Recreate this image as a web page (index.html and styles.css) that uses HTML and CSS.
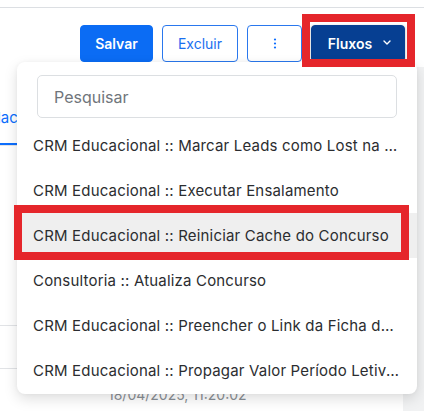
FILE: index.html
```html
<!DOCTYPE html>
<html lang="pt-BR">
<head>
<meta charset="utf-8">
<title>Fluxos</title>
<link rel="stylesheet" href="styles.css">
</head>
<body>
<div class="page">
  <div class="topbar"></div>
  <div class="toolbar">
    <button class="btn btn-primary btn-salvar">Salvar</button>
    <button class="btn btn-outline btn-excluir">Excluir</button>
    <button class="btn btn-outline btn-more" aria-label="Mais">
      <svg width="4" height="12" viewBox="0 0 4 12"><circle cx="2" cy="1.5" r="1.1" fill="#0d6efd"/><circle cx="2" cy="5.5" r="1.1" fill="#0d6efd"/><circle cx="2" cy="9.5" r="1.1" fill="#0d6efd"/></svg>
    </button>
    <button class="btn btn-dark btn-fluxos">Fluxos
      <svg class="chev" width="8" height="5" viewBox="0 0 8 5"><path d="M1 1 L4 4 L7 1" fill="none" stroke="#fff" stroke-width="1.4" stroke-linecap="round" stroke-linejoin="round"/></svg>
    </button>
  </div>
  <div class="content">
    <div class="main">
      <div class="tabs">
        <span class="tab active">Relacionamento</span>
      </div>
      <div class="table">
        <div class="row"><span class="cell">Registro anterior</span></div>
        <div class="row"><span class="cell">Registro anterior</span></div>
        <div class="row last"><span class="cell date">18/04/2025, 11:20:02</span></div>
      </div>
    </div>
    <div class="aside"></div>
  </div>

  <div class="dropdown">
    <div class="search"><input class="search-input" type="text" placeholder="Pesquisar"></div>
    <ul class="menu">
      <li class="item">CRM Educacional :: Marcar Leads como Lost na fase de Inscrição</li>
      <li class="item">CRM Educacional :: Executar Ensalamento</li>
      <li class="item hover">CRM Educacional :: Reiniciar Cache do Concurso</li>
      <li class="item">Consultoria :: Atualiza Concurso</li>
      <li class="item">CRM Educacional :: Preencher o Link da Ficha de Inscrição</li>
      <li class="item">CRM Educacional :: Propagar Valor Período Letivo Atual</li>
    </ul>
  </div>

  <div class="mark mark-fluxos"></div>
  <div class="mark mark-item"></div>
</div>
</body>
</html>
```
FILE: styles.css
```css
* { box-sizing: border-box; }
html, body { margin: 0; padding: 0; }
body {
  font-family: Inter, "Noto Sans", Arial, sans-serif;
  background: #ffffff;
  color: #212529;
  width: 424px;
  height: 411px;
  overflow: hidden;
}
.page { position: relative; width: 424px; height: 411px; overflow: hidden; }

.topbar { height: 8px; border-bottom: 1px solid #dcdfe3; }

.toolbar {
  display: flex;
  justify-content: flex-end;
  gap: 9px;
  padding: 17px 19px 0 0;
  height: 54px;
}
.btn {
  height: 37px;
  border-radius: 4px;
  font-family: Inter, Arial, sans-serif;
  font-size: 14px;
  display: flex;
  align-items: center;
  justify-content: center;
  padding: 0;
  cursor: pointer;
}
.btn-primary { background: #0b6cf4; border: 1px solid #0b6cf4; color: #fff; font-weight: 600; }
.btn-outline { background: #fff; border: 1px solid #2a78ee; color: #1a6ff0; }
.btn-dark { background: #063f92; border: 1px solid #063f92; color: #fff; font-weight: 600; box-shadow: 0 1px 3px rgba(0,0,0,.3); }
.btn-salvar { width: 73px; }
.btn-excluir { width: 76px; }
.btn-more { width: 55px; }
.btn-fluxos { width: 94px; gap: 11px; padding-left: 3px; }
.chev { margin-top: -3px; }

.content { display: flex; height: 349px; }
.main { flex: 1; }
.aside { width: 21px; background: #f1f2f3; margin-top: 5px; }

.tabs {
  margin-top: 36px;
  border-bottom: 1px solid #e3e5e8;
  overflow: hidden;
  white-space: nowrap;
}
.tab {
  display: inline-block;
  margin-left: -21px;
  padding: 10px 0 15px;
  line-height: 20px;
  font-size: 15px;
  color: #0d6efd;
  border-bottom: 2px solid #0d6efd;
}

.table { margin-top: 137px; }
.row {
  height: 43px;
  border-bottom: 1px solid #e1e3e6;
  display: flex;
  align-items: center;
  padding-left: 108px;
}
.row.last { border-bottom: none; align-items: flex-start; padding-top: 17px; }
.cell { font-size: 14px; color: #8a8f95; }

.dropdown {
  position: absolute;
  left: 17px;
  top: 62px;
  width: 400px;
  height: 332px;
  background: #fff;
  border-radius: 8px;
  box-shadow: 0 5px 14px rgba(0,0,0,.13), 0 0 4px rgba(0,0,0,.04);
  padding: 13px 0 0;
}
.search { padding: 0 20px; }
.search-input {
  width: 360px;
  height: 43px;
  border: 1px solid #dcdfe2;
  border-radius: 5px;
  padding: 0 16px;
  font-family: Inter, Arial, sans-serif;
  font-size: 16px;
  color: #333;
  outline: none;
}
.search-input::placeholder { color: #70757b; }

.menu { list-style: none; margin: 5px 0 0; padding: 0; }
.item {
  height: 45px;
  line-height: 45px;
  padding: 0 16px 0 16px;
  font-size: 15px;
  letter-spacing: 0.18px;
  color: #2b2d30;
  white-space: nowrap;
  overflow: hidden;
  text-overflow: ellipsis;
}
.item.hover { background: #efefef; }

.mark {
  position: absolute;
  border: 8px solid #e5262b;
}
.mark-fluxos { left: 302px; top: 14px; width: 113px; height: 53px; }
.mark-item { left: 14px; top: 205px; width: 395px; height: 55px; }
```
